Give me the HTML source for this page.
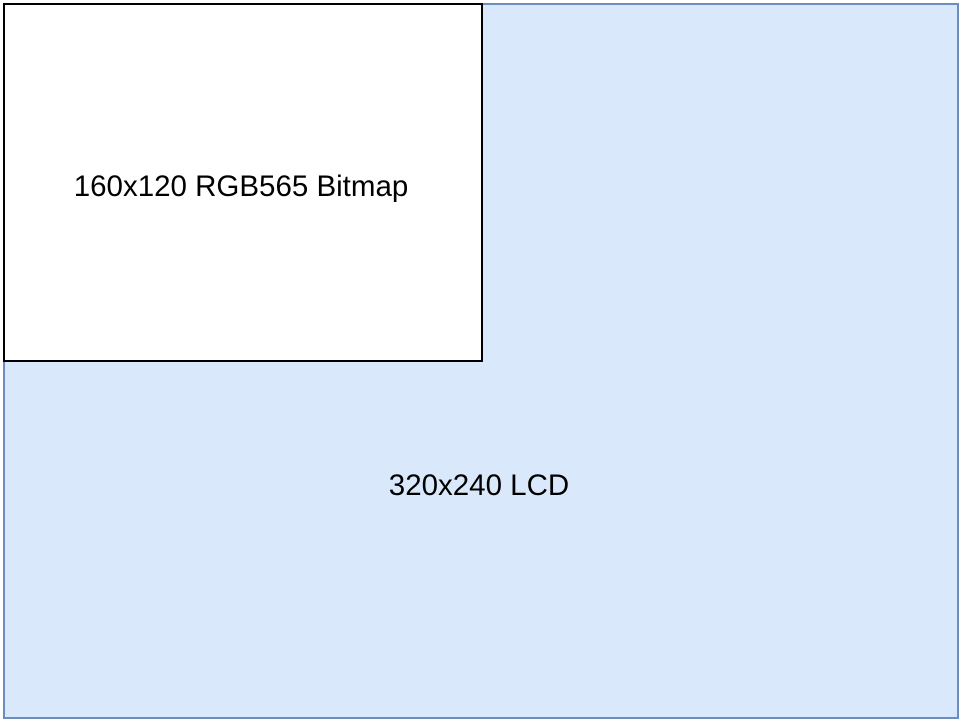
<!DOCTYPE html>
<html><head><style>
body{margin:0;width:961px;height:728px;background:#fff;position:relative;overflow:hidden;font-family:"Liberation Sans",Arial,sans-serif;}
.lcd{position:absolute;left:3px;top:3px;width:952px;height:712px;background:#dae8fc;border:2px solid #6c8ebf;}
.bmp{position:absolute;left:3px;top:3px;width:476px;height:355px;background:#fff;border:2px solid #000;}
.t{position:absolute;font-size:29.5px;color:#000;transform:translate(-50%,-50%);white-space:nowrap;}
</style></head><body>
<div class="lcd"></div>
<div class="bmp"></div>
<div class="t" style="left:241px;top:187px">160x120 RGB565 Bitmap</div>
<div class="t" style="left:479px;top:486px">320x240 LCD</div>
</body></html>
